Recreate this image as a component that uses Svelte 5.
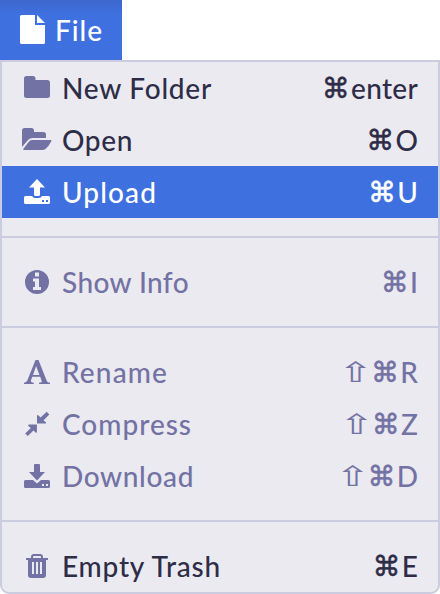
<script>
  const groups = [
    [
      { icon: 'folder', label: 'New Folder', keys: '⌘', letter: 'enter', width: 148, keyWidth: 65 },
      { icon: 'open', label: 'Open', keys: '⌘', letter: 'O', width: 69, keyWidth: 20 },
      { icon: 'upload', label: 'Upload', keys: '⌘', letter: 'U', width: 93, keyWidth: 17, active: true }
    ],
    [{ icon: 'info', label: 'Show Info', keys: '⌘', letter: 'I', width: 125, keyWidth: 3, muted: true }],
    [
      { icon: 'rename', label: 'Rename', keys: '⇧⌘', letter: 'R', width: 104, keyWidth: 15, muted: true },
      { icon: 'compress', label: 'Compress', keys: '⇧⌘', letter: 'Z', width: 128, keyWidth: 15, muted: true },
      { icon: 'download', label: 'Download', keys: '⇧⌘', letter: 'D', width: 130, keyWidth: 17, muted: true }
    ],
    [{ icon: 'trash', label: 'Empty Trash', keys: '⌘', letter: 'E', width: 157, keyWidth: 14 }]
  ];

  // Spreads the letters of a label evenly over the given width.
  function fit(node, width) {
    const n = node.textContent.length;
    const natural = node.getBoundingClientRect().width;
    if (n > 1) node.style.letterSpacing = `${(width + 2 - natural) / n}px`;
  }
</script>

{#snippet glyph(name)}
  <svg class="icon" width="30" height="28" viewBox="0 0 30 28" fill="currentColor" aria-hidden="true">
    {#if name === 'folder'}
      <path d="M2 4.5Q2 2 4.5 2h6.3Q13.5 2 13.5 4.5V6h11.7Q28 6 28 8.700V21.500Q28 24 25.500 24h-21Q2 24 2 21.500z" />
    {:else if name === 'open'}
      <path d="M0 4.500Q0 2 2.500 2h6.800Q12 2 12 4.500V6h9.500Q24 6 24 8.500V12H10.500Q8 12 6 14L0 21z" />
      <path d="M10 14H28.700Q29.700 14 29.300 15.200Q26.500 20.500 24 22.500Q22.300 24 20 24H2.200Q.7 24 1.300 22.900L6.600 16Q8 14 10 14z" />
    {:else if name === 'upload'}
      <path d="M15 1L23 9.500H18V16.500Q18 18 16.500 18h-3Q12 18 12 16.500V9.500H7z" />
      <path fill-rule="evenodd" d="M3.500 18H10Q11 20 13 20h4Q19 20 20 18h6.500Q28 18 28 19.500v5Q28 26 26.500 26h-23Q2 26 2 24.500v-5Q2 18 3.500 18zM20 22v2h2v-2zm4 0v2h2v-2z" />
    {:else if name === 'download'}
      <path d="M12 3Q12 2 13 2h4Q18 2 18 3v7h5L15 18.500L7 10h5z" />
      <path fill-rule="evenodd" d="M3.500 18H11L15 21.500L19 18h7.500Q28 18 28 19.500v5Q28 26 26.500 26h-23Q2 26 2 24.500v-5Q2 18 3.500 18zM20 22v2h2v-2zm4 0v2h2v-2z" />
    {:else if name === 'info'}
      <path fill-rule="evenodd" d="M15 2a12 12 0 1 1 0 24a12 12 0 1 1 0-24zM13 4.500v4h4v-4zM11 10.500v3h2V19h-2v3h8v-3h-2v-8.500z" />
    {:else if name === 'rename'}
      <path fill-rule="evenodd" d="M13.500 2h3L24.800 23Q25.300 24.500 28 24.700V26H17v-1.300Q20.300 24.500 19.800 23.200L18.200 18.800H10.300L9 22.200Q8.300 24.500 11.800 24.700V26H2v-1.300Q4.500 24.500 5.300 22.500zM14.100 8L11 17h6.500z" />
    {:else if name === 'compress'}
      <path d="M15 5.500Q15.500 4.500 16.500 5.500L18.600 7.600L24.700 1.800L27.300 4.400L21.400 10.400L24 12.300Q24.600 13.500 23.300 13.500H15z" />
      <path d="M14.900 14.600H7Q5.500 14.800 6.400 16L8.800 18L3.200 23.400L5.800 26L11.500 20.600L13.600 22.600Q14.900 23.300 14.900 22z" />
    {:else if name === 'trash'}
      <path fill-rule="evenodd" d="M6 8H24V23Q24 26 21 26H9Q6 26 6 23zM10 10v12h2V10zM14 10v12h2V10zM18 10v12h2V10z" />
      <path d="M4 6h22v2H4z" />
      <path d="M10 7V5q0-2 2-2h6q2 0 2 2v2" fill="none" stroke="currentColor" stroke-width="2" />
    {/if}
  </svg>
{/snippet}

<div class="app">
  <header>
    <div class="tab">
      <svg width="26" height="30" viewBox="0 0 26 30" fill="#fff" aria-hidden="true">
        <path d="M1.500 0H15V10H25V27.500Q25 29 23.500 29h-22Q0 29 0 27.500v-26Q0 0 1.500 0zM17 0L25 8H17z" />
      </svg>
      <span class="title" use:fit={46}>File</span>
    </div>
  </header>
  <div class="menu">
    {#each groups as group, i}
      {#if i}<div class="line"></div>{/if}
      {#each group as item}
        <div class="row" class:active={item.active} class:muted={item.muted}>
          {@render glyph(item.icon)}
          <span class="label" use:fit={item.width}>{item.label}</span>
          <span class="shortcut">
            {#each item.keys as key}<span class="key" class:shift={key === '⇧'}>{key}</span>{/each}<span class="letter" use:fit={item.keyWidth}>{item.letter}</span>
          </span>
        </div>
      {/each}
    {/each}
  </div>
</div>

<style>
  :global(body) { background: #fff; }
  .app {
    width: 440px;
    height: 594px;
    overflow: hidden;
    font: 500 28px/52px Lato, sans-serif;
  }
  header { display: flex; height: 60px; }
  .tab {
    box-sizing: border-box;
    width: 122px;
    height: 60px;
    padding-left: 20px;
    display: flex;
    align-items: center;
    color: #fff;
    background: linear-gradient(#3d68cc, #3f70df 14px, #3f70df);
  }
  .title { margin-left: 9px; white-space: pre; }
  .menu {
    box-sizing: border-box;
    height: 534px;
    border: 2px solid #cbcce0;
    border-radius: 0 0 9px 9px;
    background: #ebeaf0;
    color: #2e2d48;
  }
  .row {
    display: flex;
    align-items: center;
    height: 52px;
    padding: 0 20px;
  }
  .icon { color: #7372a4; flex: none; }
  .label { margin-left: 10px; white-space: pre; }
  .shortcut { margin-left: auto; display: flex; }
  .key {
    width: 27px;
    padding-top: 1px;
    font-family: "DejaVu Sans", sans-serif;
    line-height: 52px;
    text-align: center;
    -webkit-text-stroke: 0.5px currentColor;
  }
  .shift { width: 31px; transform: scaleX(1.5); -webkit-text-stroke: 0; }
  .letter { margin-left: 2px; }
  .muted { color: #7372a4; }
  .active, .active .icon { color: #fff; background: #3f70df; }
  .line { height: 2px; margin: 18px 0; background: #cbcce0; }
</style>
